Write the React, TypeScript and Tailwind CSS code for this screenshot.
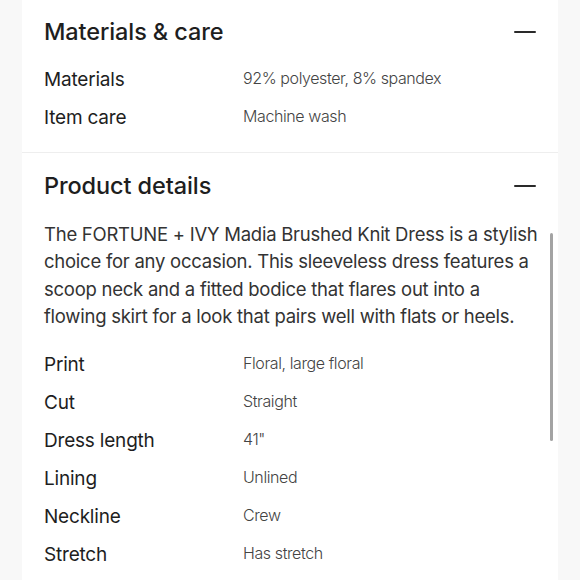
import React from 'react';

const materials = [
  { label: 'Materials', value: '92% polyester, 8% spandex' },
  { label: 'Item care', value: 'Machine wash' },
];

const details = [
  { label: 'Print', value: 'Floral, large floral' },
  { label: 'Cut', value: 'Straight' },
  { label: 'Dress length', value: '41"' },
  { label: 'Lining', value: 'Unlined' },
  { label: 'Neckline', value: 'Crew' },
  { label: 'Stretch', value: 'Has stretch' },
];

const Minus = () => <span className="block w-[22px] h-[2px] bg-[#2a2a2a] rounded-full" />;

const Header = ({ title }: { title: string }) => (
  <div className="flex items-center justify-between h-[32px] pr-[22px]">
    <h2 className="text-[23.5px] font-medium text-[#1e1e1e] tracking-[-0.1px]">{title}</h2>
    <Minus />
  </div>
);

const Row = ({ label, value }: { label: string; value: string }) => (
  <div className="grid grid-cols-[199px_1fr] items-center h-[38px]">
    <span className="text-[19px] text-[#1e1e1e] tracking-[-0.2px]">{label}</span>
    <span className="text-[16px] font-light text-[#444] tracking-[-0.4px] -mt-[5px]">{value}</span>
  </div>
);

export default function App() {
  return (
    <div className="w-[580px] h-[580px] bg-[#f8f8f8] px-[22px] overflow-hidden" style={{ fontFamily: 'Inter, "Noto Sans", sans-serif' }}>
      <div className="relative bg-white h-full">
        <section className="pl-[22px] pt-[16px] pb-[15px] border-b border-[#eeeeee]">
          <Header title="Materials & care" />
          <div className="mt-[13px]">
            {materials.map((m) => (
              <Row key={m.label} {...m} />
            ))}
          </div>
        </section>

        <section className="pl-[22px] pt-[17px]">
          <Header title="Product details" />
          <p className="mt-[19px] pr-[14px] text-[18.5px] leading-[27.3px] text-[#333] tracking-[-0.25px]">
            The FORTUNE + IVY Madia Brushed Knit Dress is a stylish choice for any occasion. This sleeveless dress features a scoop neck and a fitted bodice that flares out into a flowing skirt for a look that pairs well with flats or heels.
          </p>
          <div className="mt-[16px]">
            {details.map((d) => (
              <Row key={d.label} {...d} />
            ))}
          </div>
        </section>

        <div className="absolute left-[528px] top-[233px] w-[3px] h-[208px] rounded-full bg-[#a3a3a3]" />
      </div>
    </div>
  );
}
